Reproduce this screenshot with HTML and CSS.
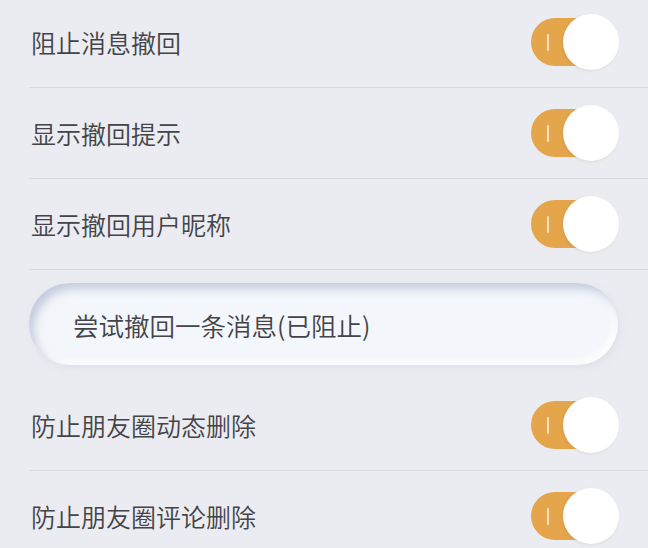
FILE: index.html
```html
<!DOCTYPE html>
<html>
<head>
	<meta charset="UTF-8"/>
	<title>撤回设置</title>
	<link rel="stylesheet" href="styles.css">
</head>
<body>

<div class="list">
	<div class="row">
		<span class="label">阻止消息撤回</span>
		<span class="switch on"><i class="mark"></i><i class="knob"></i></span>
	</div>
	<div class="row">
		<span class="label">显示撤回提示</span>
		<span class="switch on"><i class="mark"></i><i class="knob"></i></span>
	</div>
	<div class="row">
		<span class="label">显示撤回用户昵称</span>
		<span class="switch on"><i class="mark"></i><i class="knob"></i></span>
	</div>

	<div class="action">
		<div class="button">尝试撤回一条消息(已阻止)</div>
	</div>

	<div class="row">
		<span class="label">防止朋友圈动态删除</span>
		<span class="switch on"><i class="mark"></i><i class="knob"></i></span>
	</div>
	<div class="row">
		<span class="label">防止朋友圈评论删除</span>
		<span class="switch on"><i class="mark"></i><i class="knob"></i></span>
	</div>
</div>

</body>
</html>
```

FILE: styles.css
```css
html {
	background: #ebecf1;
	font-family: "Noto Sans CJK SC", "Noto Sans", sans-serif;
	color: #434348;
}

body {
	margin: 0;
	padding: 0;
	overflow: hidden;
}

.list {
	margin-top: -3px;
	padding-left: 29px;
}

/* setting rows */
.row {
	display: flex;
	align-items: center;
	justify-content: space-between;
	height: 90px;
	padding-right: 29px;
	border-bottom: 1px solid #d9dae0;
}

.label {
	font-size: 25px;
	font-weight: 350;
	line-height: 1;
	padding-left: 2px;
}

/* toggle */
.switch {
	position: relative;
	display: block;
	width: 88px;
	height: 56px;
}

.switch .mark,
.switch .knob {
	position: absolute;
	display: block;
}

.switch::before {
	content: "";
	position: absolute;
	left: 0;
	top: 4px;
	width: 72px;
	height: 48px;
	border-radius: 24px;
	background: #e4a54b;
}

.mark {
	left: 16px;
	top: 20px;
	width: 2px;
	height: 17px;
	border-radius: 1px;
	background: #fae3bd;
}

.knob {
	right: 0;
	top: 0;
	width: 56px;
	height: 56px;
	border-radius: 50%;
	background: #fff;
	box-shadow: -1px 1px 3px rgba(150, 120, 70, 0.15);
}

/* try button */
.action {
	padding: 13px 30px 15px 0;
}

.button {
	display: flex;
	align-items: center;
	height: 82px;
	padding-left: 44px;
	border-radius: 41px;
	background: #f3f6fa;
	font-size: 25.5px;
	font-weight: 350;
	box-shadow:
		inset 5px 6px 8px rgba(160, 170, 200, 0.55),
		inset -4px -4px 8px rgba(255, 255, 255, 0.9),
		2px 3px 6px rgba(210, 214, 226, 0.5);
}
```
